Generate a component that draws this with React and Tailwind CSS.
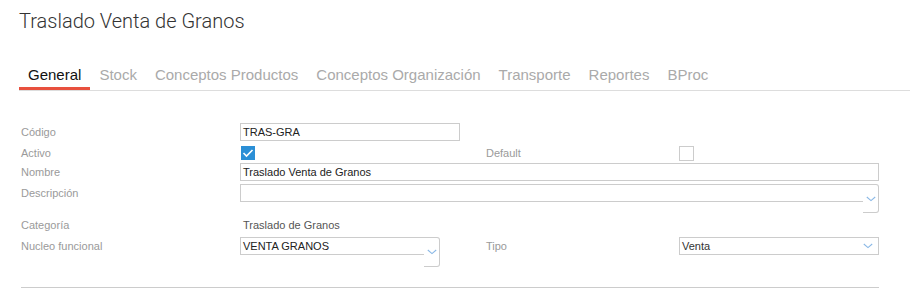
import React from "react";

function Chevron() {
  return (
    <svg width="10" height="6" viewBox="0 0 10 6" className="block">
      <path d="M0.8 1 L5 4.6 L9.2 1" fill="none" stroke="#8ab8e6" strokeWidth="1.1" />
    </svg>
  );
}

function Combo({ value, inputW, tall }) {
  return (
    <div className="flex items-start">
      <div className={`h-[18px] border border-r-0 border-[#cccccc] pl-[2px] flex items-center text-[#222] ${inputW}`}>
        {value}
      </div>
      <div className={`w-[16px] ${tall} border border-l-0 border-[#cccccc] rounded-r-[3px] flex items-center justify-center`}>
        <Chevron />
      </div>
    </div>
  );
}

export default function App() {
  const label = "text-[#9a9a9a] flex items-center h-[18px]";
  return (
    <div className="w-[910px] h-[288px] bg-white overflow-hidden pl-[19px] font-['Liberation_Sans',Arial,sans-serif]">
      <h1 className="pt-[9px] leading-[24px] text-[20px] text-[#333333] font-['Roboto',sans-serif] font-light">
        Traslado Venta de Granos
      </h1>

      <div className="mt-[33px] flex border-b border-[#dddddd] text-[15px] leading-[18px]">
        {["General", "Stock", "Conceptos Productos", "Conceptos Organización", "Transporte", "Reportes", "BProc"].map((t, i) => (
          <div
            key={t}
            className={
              i === 0
                ? "px-[9px] pb-[3px] border-b-[3px] border-[#e8503e] text-[#111111]"
                : "px-[9px] pb-[3px] border-b-[3px] border-transparent text-[#aaaaaa]"
            }
          >
            {t}
          </div>
        ))}
      </div>

      <div className="mt-[32px] pl-[2px] w-[860px] text-[11px] leading-[13px]">
        <div className="grid grid-cols-[219px_246px_193px_200px] items-center h-[18px]">
          <div className={label}>Código</div>
          <div className="w-[220px] h-[18px] border border-[#cccccc] pl-[2px] flex items-center text-[#222]">TRAS-GRA</div>
        </div>

        <div className="mt-[3px] grid grid-cols-[219px_246px_193px_200px] items-center h-[18px]">
          <div className={label}>Activo</div>
          <div className="pl-[1px]">
            <div className="w-[14px] h-[14px] bg-[#2b8fd6] flex items-center justify-center">
              <svg width="12" height="10" viewBox="0 0 12 10">
                <path d="M1.5 5 L4.5 8 L10.5 2" fill="none" stroke="white" strokeWidth="1.6" />
              </svg>
            </div>
          </div>
          <div className={label}>Default</div>
          <div className="w-[15px] h-[15px] border border-[#cccccc] bg-white"></div>
        </div>

        <div className="mt-[1px] grid grid-cols-[219px_639px] items-center h-[18px]">
          <div className={label}>Nombre</div>
          <div className="h-[18px] border border-[#cccccc] pl-[2px] flex items-center text-[#222]">Traslado Venta de Granos</div>
        </div>

        <div className="mt-[3px] grid grid-cols-[219px_639px] items-start">
          <div className={label}>Descripción</div>
          <Combo value="" inputW="w-[623px]" tall="h-[29px]" />
        </div>

        <div className="mt-[3px] grid grid-cols-[219px_246px] items-center h-[18px]">
          <div className={label}>Categoría</div>
          <div className="pl-[3px] text-[#555555]">Traslado de Granos</div>
        </div>

        <div className="mt-[3px] grid grid-cols-[219px_246px_193px_200px] items-start">
          <div className={label}>Nucleo funcional</div>
          <Combo value="VENTA GRANOS" inputW="w-[184px]" tall="h-[30px]" />
          <div className={label}>Tipo</div>
          <div className="h-[18px] border border-[#cccccc] pl-[2px] pr-[5px] flex items-center justify-between text-[#333]">
            <span>Venta</span>
            <Chevron />
          </div>
        </div>

        <div className="mt-[20px] border-t border-[#cccccc] w-[858px]"></div>
      </div>
    </div>
  );
}
